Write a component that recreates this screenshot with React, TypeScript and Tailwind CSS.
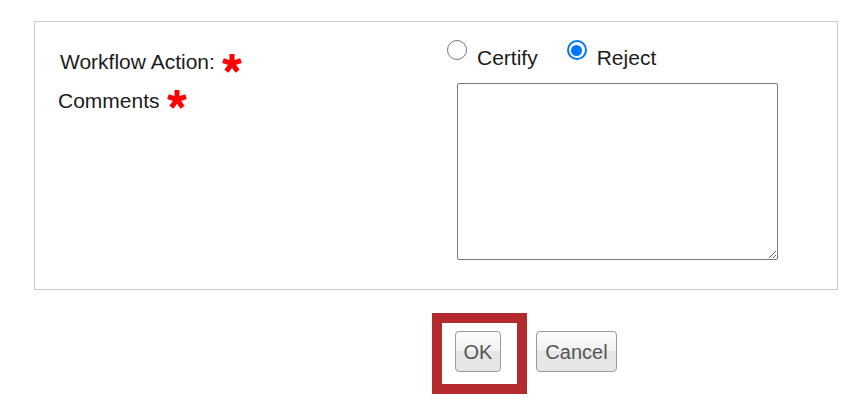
import React from "react";

function Star({ className = "" }: { className?: string }) {
  const cx = 10;
  const cy = 10.5;
  const r = 9.5;
  const angles = [-90, -18, 54, 126, 198];
  return (
    <svg width="20" height="20" viewBox="0 0 20 20" className={"blur-[0.45px] " + className}>
      {angles.map((a) => {
        const rad = (a * Math.PI) / 180;
        return (
          <line
            key={a}
            x1={cx}
            y1={cy}
            x2={cx + r * Math.cos(rad)}
            y2={cy + r * Math.sin(rad)}
            stroke="#ff0000"
            strokeWidth="5"
            strokeLinecap="butt"
          />
        );
      })}
    </svg>
  );
}

export default function App() {
  return (
    <div
      className="relative w-[854px] h-[404px] bg-white overflow-hidden text-[#1c1c1c]"
      style={{ fontFamily: '"Liberation Sans", Arial, sans-serif' }}
    >
      <div className="ml-[34px] mt-[21px] w-[804px] h-[269px] border border-[#cccccc] flex">
        <div className="w-[411px] pt-[28px] text-[21px] leading-[24px]">
          <div className="flex items-center pl-[25px]">
            <span>Workflow Action:</span>
            <Star className="ml-[7px] mt-[2px]" />
          </div>
          <div className="flex items-start pl-[23px] mt-[15px]">
            <span>Comments</span>
            <Star className="ml-[7px] mt-[0px]" />
          </div>
        </div>
        <div className="pt-[18px] text-[21px] leading-[24px]">
          <div className="flex items-start">
            <span className="ml-[1px] w-[20px] h-[20px] rounded-full border-[1.5px] border-[#767676] bg-white" />
            <span className="ml-[10px] mt-[6px]">Certify</span>
            <span className="ml-[29px] w-[20px] h-[20px] rounded-full border-[2px] border-[#0075ff] bg-white flex items-center justify-center">
              <span className="w-[11px] h-[11px] rounded-full bg-[#0075ff]" />
            </span>
            <span className="ml-[10px] mt-[6px]">Reject</span>
          </div>
          <textarea
            className="block mt-[13px] ml-[11px] w-[321px] h-[177px] border border-[#767676] rounded-[2px] bg-white resize"
            defaultValue=""
          />
        </div>
      </div>
      <div className="flex mt-[41px] ml-[455px] text-[20px] text-[#555]">
        <button className="w-[46px] h-[41px] rounded-[4px] border border-[#9a9a9a] bg-[linear-gradient(to_bottom,#fbfbfb_0%,#f2f2f2_50%,#e6e6e6_50%,#e6e6e6_100%)] flex items-center justify-center">
          OK
        </button>
        <button className="ml-[35px] w-[81px] h-[41px] rounded-[4px] border border-[#9a9a9a] bg-[linear-gradient(to_bottom,#fbfbfb_0%,#f2f2f2_50%,#e6e6e6_50%,#e6e6e6_100%)] flex items-center justify-center">
          Cancel
        </button>
      </div>
      <div className="absolute left-[432px] top-[313px] w-[95px] h-[81px] border-[10px] border-[#b52a2f]" />
    </div>
  );
}
